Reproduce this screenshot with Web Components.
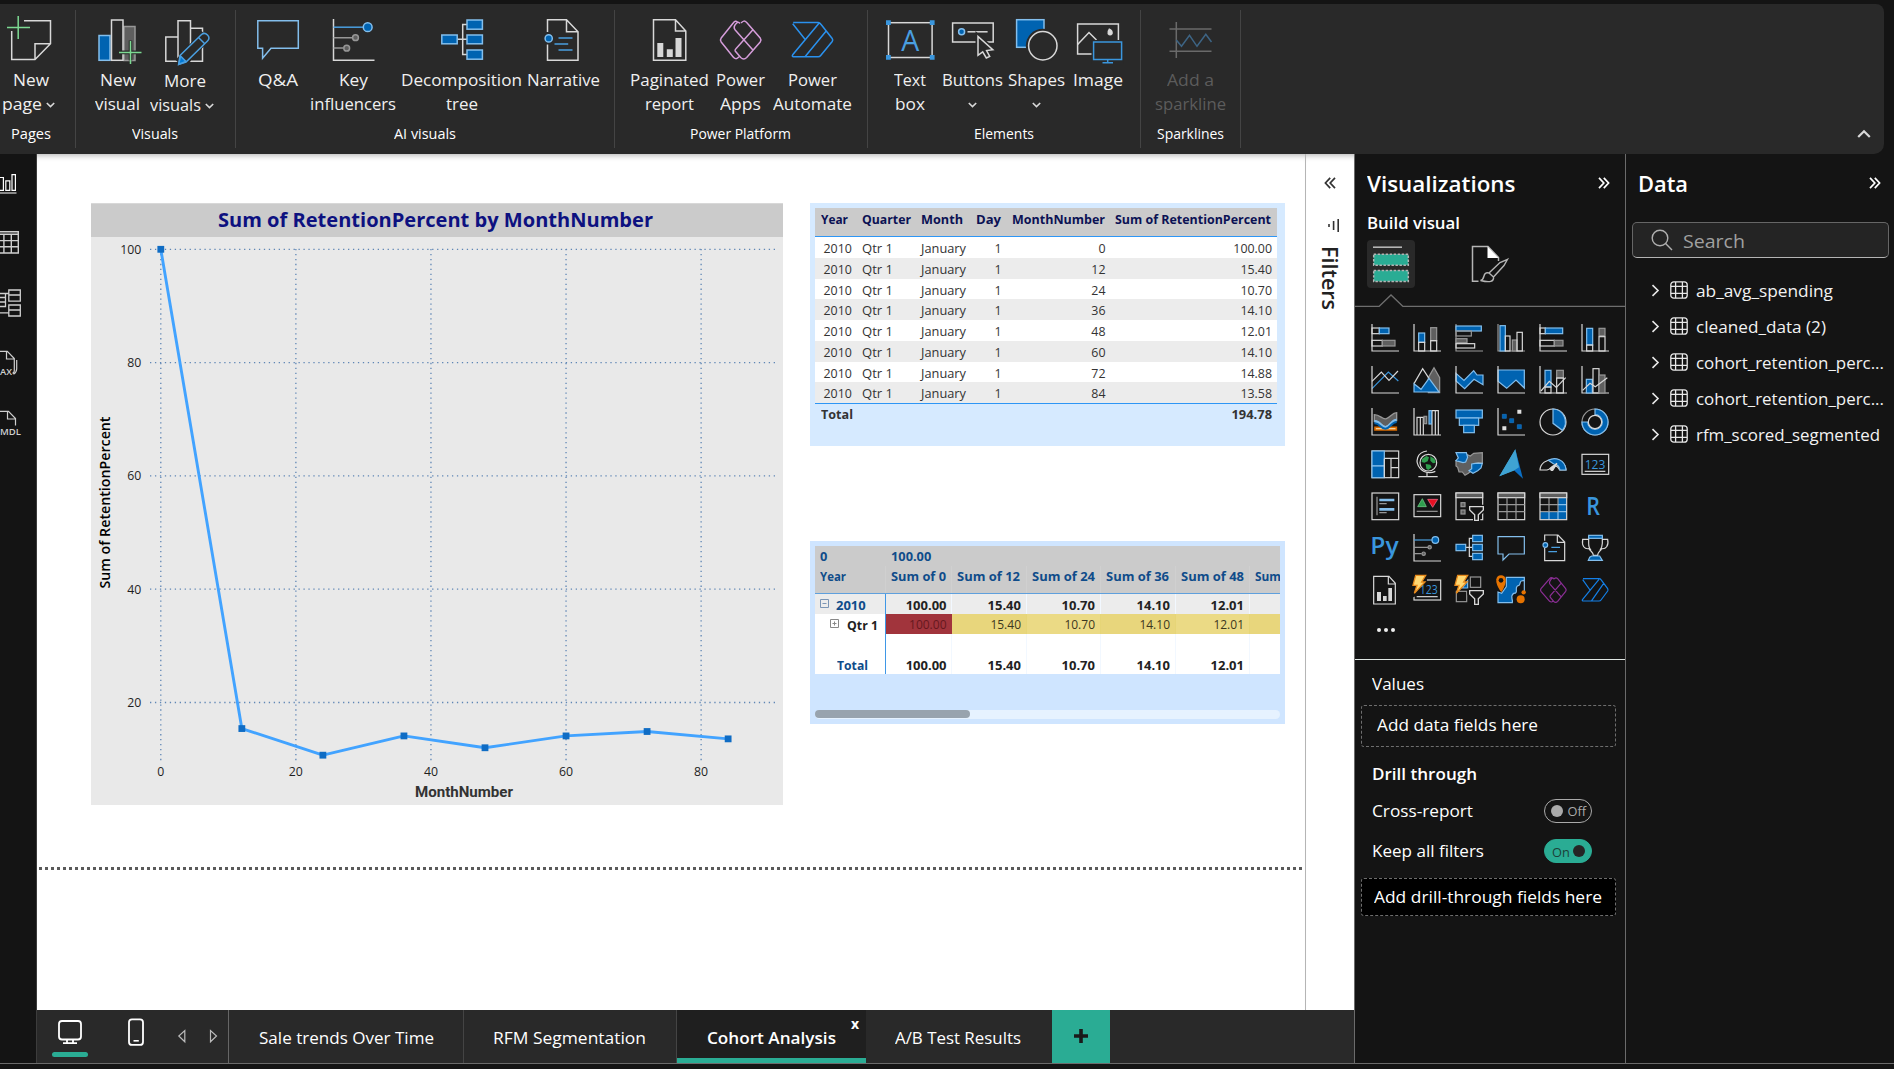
<!DOCTYPE html>
<html lang="en">
<head>
<meta charset="utf-8">
<title>Cohort Analysis</title>
<style>
html,body{margin:0;height:100%;background:#141414;overflow:hidden}
body{font-family:"Open Sans","Noto Sans",sans-serif;color:#fff}
</style>
</head>
<body>
<report-app></report-app>
<script>
const define = (name, css, html, init) => {
  const tpl = document.createElement('template');
  customElements.define(name, class extends HTMLElement {
    constructor() { super(); this.attachShadow({ mode: 'open' }); }
    connectedCallback() {
      if (this.ready) return;
      this.ready = true;
      const body = typeof html === 'function' ? html(this) : html;
      tpl.innerHTML = `<style>*{box-sizing:border-box}${css}</style>${body}`;
      this.shadowRoot.appendChild(tpl.content.cloneNode(true));
      if (init) init(this);
    }
  });
};
const T = (w, s) => `<fit-text w="${w}">${s}</fit-text>`;

/* ---------- application shell ---------- */
define('report-app', `
:host{display:flex;flex-direction:column;width:1894px;height:1069px;padding-top:4px;background:#141414}
.mid{display:flex;height:909px}
.work{display:flex;flex-direction:column;width:1317px}
.row{display:flex;height:856px}
.foot{height:6px;border-top:1px solid #6b6b6b}
`, `
<ribbon-bar></ribbon-bar>
<div class="mid"><view-rail></view-rail>
<div class="work"><div class="row"><report-canvas></report-canvas><filters-pane></filters-pane></div><page-tabs></page-tabs></div>
<viz-pane></viz-pane><data-pane></data-pane></div>
<div class="foot"></div>`);

/* ---------- ribbon ---------- */
const W = '#d8d8d8', B = '#0063b1', L = '#83beec', BG = '#292929';
const ribbonIcons = {
page:`<path d="M24 20.7H50.5V43.7L35 59.5H11.7V31M35 59.5V43.7H50.5" stroke="${W}"/><path d="M18.2 16V39M7 27.4H30" stroke="#7cd992"/>`,
newv:`<rect x="124" y="26.5" width="11" height="34" fill="#5f5f5f" stroke="#979797"/><rect x="99" y="35.5" width="11" height="24.8" fill="${B}" stroke="${L}"/><rect x="111.5" y="20" width="11.5" height="40.3" fill="${BG}" stroke="${W}"/><path d="M130.5 40.5V60.5M122 52.4H136" stroke="${BG}" stroke-width="3.6"/><path d="M130.5 41V64M119 52.4H141.5" stroke="#7cd992"/>`,
more:`<path d="M177.5 61.2H165.8V37H177.5M178 61.2V20.7H190.5V61.2H178M190.5 28.3H202.5V61.2H190.5" stroke="${W}"/><path d="M180 64 206 35" stroke="${BG}" stroke-width="12"/><path d="M180 55.5 201.5 34.5Q204.5 32 207.5 35T207.5 41L186 62 178.7 64.3ZM198.5 37.5 204.5 43.5" stroke="#4a9fe0"/><path d="M180.5 56 186 61.5 178.7 64.3Z" fill="#0078d4" stroke="#4a9fe0"/>`,
qa:`<path d="M257.8 20.8H298.3V48.3H271L262.6 58.3V48.3H257.8Z" stroke="${L}"/>`,
key:`<path d="M333 19V60.2H374" stroke="${W}"/><path d="M333 37.7H352M333 48H343" stroke="#979797"/><path d="M333 27.2H363" stroke="#4a9fe0"/><circle cx="367.2" cy="27.2" r="4.4" fill="${B}" stroke="${L}"/><circle cx="355" cy="37.7" r="2.9" fill="#5f5f5f" stroke="#979797"/><circle cx="346.2" cy="48.2" r="2.9" fill="#5f5f5f" stroke="#979797"/>`,
tree:`<path d="M457.5 39.3H467M467 24.5H462.7V54.5H467" stroke="${W}"/><g fill="${B}" stroke="${L}"><rect x="441.8" y="35" width="15.4" height="8.8"/><rect x="467" y="20" width="15.4" height="9.2"/><rect x="467" y="35" width="15.4" height="8.8"/><rect x="467" y="50" width="15.4" height="9.2"/></g>`,
narr:`<path d="M547 32V19.8H566L577.5 31.7V60.3H547V44.5M566 20V31.7H577.5" stroke="${W}"/><path d="M558 38H572M554 44H567.7M558 50H572" stroke="#4a9fe0"/><circle cx="548.2" cy="38.4" r="3.6" fill="${B}" stroke="${L}"/>`,
pag:`<path d="M653 19.8H675L685.3 31V60.3H653ZM675 20V31H685" stroke="${W}"/><path d="M656.8 43H662.8V57H656.8ZM666.3 49.3H672.3V57H666.3ZM675 38H681V57H675Z" fill="${W}"/>`,
apps:`<path d="M735.5 30Q733 27 736.5 23.5 738.5 21 740.3 23.5M741.5 23Q744 19.5 747 22.5L760.5 38Q762 40 760.5 42L747 57.5Q744 60.5 741 57.5L735.5 51Q735 50 736 49L753 30M735.5 30 753.2 50M737.8 22Q735.5 20.2 733.5 23L721.5 38Q720 40 721.5 42L733.5 57Q736 60 738.5 57.5L740 56" stroke="#d59dda"/>`,
auto:`<path d="M793.5 22.6H818.5Q820 22.6 821 24L832.5 38.5Q833.6 40 832.5 41.5L821 55.5Q820 56.8 818.5 56.8H793.5Q792 56.5 793 54.8L819.5 23M793 23.8 805.5 39.5M826.5 31 805.5 56.5" stroke="#2a91ee"/>`,
text:`<rect x="888.5" y="22.7" width="43.6" height="34.8" stroke="${W}"/><path d="M886 20.2h4.8v4.8h-4.8ZM929.8 20.2h4.8v4.8h-4.8ZM886 55h4.8v4.8h-4.8ZM929.8 55h4.8v4.8h-4.8Z" fill="#3a96dd"/><text x="910.3" y="50.7" font-size="29" text-anchor="middle" fill="#4a9fe0" font-family="Open Sans" font-weight="400" textLength="18" lengthAdjust="spacingAndGlyphs">A</text>`,
btn:`<rect x="952.6" y="23" width="40.6" height="19" stroke="${W}"/><circle cx="961.6" cy="31.8" r="3" fill="${B}" stroke="${L}"/><path d="M967.5 31.8H987.6" stroke="${W}"/><path d="M978 36.5V55.3L982.7 51.8 986.3 58 989.7 56.3 986.6 50.5 992.8 49.8Z" fill="${BG}" stroke="${BG}" stroke-width="5"/><path d="M978 36.5V55.3L982.7 51.8 986.3 58 989.7 56.3 986.6 50.5 992.8 49.8Z" fill="${BG}" stroke="${W}"/>`,
shp:`<rect x="1016.6" y="19.7" width="27.4" height="27.6" fill="${B}" stroke="${L}"/><circle cx="1042.8" cy="45.8" r="17" fill="${BG}"/><circle cx="1042.8" cy="45.8" r="14.2" stroke="${W}"/>`,
img:`<rect x="1077.6" y="24" width="40.8" height="30" stroke="${W}"/><path d="M1077.6 44.5 1089 32.5 1096.5 40" stroke="${W}"/><path d="M1109 28.3Q1113.5 30 1112.7 34 1110 37 1107.5 34 1107 31 1109 28.3Z" fill="${W}"/><rect x="1091.5" y="40" width="32" height="24" fill="${BG}"/><path d="M1093.6 42H1121.6V59.6H1093.6ZM1107.7 59.6V62.7M1102.5 62.7H1113" stroke="#3a96dd"/>`,
spk:`<path d="M1175.8 22V58M1169 29H1211M1169 51.2H1211" stroke="#6a6a6a"/><path d="M1175.8 40 1181 46.3 1189 35.3 1196.5 46.3 1205.3 34.3 1211 42" stroke="#3d6484"/>`
};
const chev = `<svg class="cv" width="9" height="6" viewBox="0 0 9 6"><path d="M.8 1 4.5 4.6 8.2 1" fill="none" stroke="#d8d8d8" stroke-width="1.6"/></svg>`;
// Each command: icon, centre x, cell width, line one and line two as [width, text, chevron]
const groups = [
 [0,75,[40,'Pages'],31,[['page',31,62,[36,'New'],[40,'page',1]]]],
 [75,235,[46,'Visuals'],155,[['newv',118,60,[36,'New'],[45,'visual']],['more',186,68,[42,'More'],[51,'visuals',1]]]],
 [235,614,[62,'AI visuals'],425,[['qa',278,60,[40,'Q&amp;A']],['key',353.5,88,[29,'Key'],[86,'influencers']],['tree',462,122,[121,'Decomposition'],[32,'tree']],['narr',563.5,76,[73,'Narrative']]]],
 [614,867,[101,'Power Platform'],740.5,[['pag',669.5,80,[79,'Paginated'],[49,'report']],['apps',741.3,60,[49,'Power'],[41,'Apps']],['auto',813.3,82,[49,'Power'],[79,'Automate']]]],
 [867,1140,[60,'Elements'],1003.5,[['text',910,60,[32,'Text'],[30,'box']],['btn',973,62,[61,'Buttons'],[0,'',1]],['shp',1037,60,[57,'Shapes'],[0,'',1]],['img',1098,56,[50,'Image']]]],
 [1140,1240,[67,'Sparklines'],1190.5,[['spk',1190.5,80,[47,'Add a'],[71,'sparkline']]]]
];
define('ribbon-button', `
:host{display:flex;flex-direction:column;align-items:center;flex:none;width:var(--w);color:#f0f0f0;font-size:17px}
:host([icon=spk]){color:#5c5c5c}
svg.ic{display:block;fill:none;stroke-width:1.5;overflow:visible}
.l{display:flex;height:24px;line-height:24px;align-items:center;justify-content:center;padding-right:1px}
:host([icon=page]) .l{padding-right:0}
:host([icon=page]) .l+.l{padding-right:5px}
:host([icon=more]) .l{position:relative;top:1px;padding-right:2px}
:host([icon=more]) .l+.l{padding-right:8px}
.cv{margin-left:4px;margin-top:2px}.solo .cv{margin-left:0;margin-right:1px}`,
 el => {
  const [ic, cx, w, a, b] = el.data;
  const line = l => l ? `<div class="l${l[1] ? '' : ' solo'}">${l[1] ? T(l[0], l[1]) : ''}${l[2] ? chev : ''}</div>` : '';
  return `<svg class="ic" width="50" height="54" viewBox="${cx - 25} 14 50 54">${ribbonIcons[ic]}</svg>${line(a)}${line(b)}`;
 });
define('ribbon-bar', `
:host{display:flex;position:relative;flex:none;width:1884px;height:150px;background:#292929;border-radius:0 8px 10px 0;z-index:2}
.g{display:flex;flex-direction:column;height:138px;margin-top:6px;border-right:1px solid #444}
.items{display:flex;height:112px;padding-top:4px;flex:none}
.lab{font-size:14.2px;line-height:20px;margin-top:2px;color:#fff;white-space:nowrap}
.up{margin:125px 13px 0 auto}`,
 '', el => {
  for (const [x0, x1, lab, lc, items] of groups) {
    const g = document.createElement('div'); g.className = 'g';
    g.style.width = (x1 - x0) + (x0 ? 0 : 1) + 'px';
    const row = document.createElement('div'); row.className = 'items';
    let at = x0 + (x0 ? 1 : 0);
    for (const it of items) {
      const b = document.createElement('ribbon-button');
      b.data = it; b.setAttribute('icon', it[0]);
      b.style.setProperty('--w', it[2] + 'px');
      b.style.marginLeft = (it[1] - it[2] / 2 - at) + 'px';
      at = it[1] + it[2] / 2;
      row.append(b);
    }
    const l = document.createElement('div'); l.className = 'lab';
    l.style.paddingLeft = (lc - lab[0] / 2 - x0 - (x0 ? 1 : 0)) + 'px';
    l.innerHTML = T(lab[0], lab[1]);
    g.append(row, l); el.shadowRoot.append(g);
  }
  const up = document.createElement('template');
  up.innerHTML = `<svg class="up" width="14" height="10" viewBox="0 0 14 10"><path d="M1.2 8 7 2.2 12.8 8" fill="none" stroke="#d8d8d8" stroke-width="2.2"/></svg>`;
  el.shadowRoot.append(up.content);
 });

/* ---------- left view rail ---------- */
define('view-rail', `
:host{display:flex;flex-direction:column;flex:none;width:37px;background:#141414;border-right:1px solid #3c3c3c;overflow:hidden}
svg{display:block;flex:none;fill:none;stroke:#cfcfcf;stroke-width:1.2}
text{fill:#cfcfcf;stroke:none;font:600 9.5px "Open Sans"}`, `
<svg width="36" height="60" viewBox="0 154 36 60" stroke-width="1.4" style="stroke:#fff"><path d="M-1 177.5H3.4V190.3H-1M5.8 180.8H9.8V190.3H5.8ZM12 174.6H15.4V190.3H12ZM0 193H16.5"/></svg>
<svg width="36" height="60" viewBox="0 214 36 60"><path d="M0 231.7H18.3V253H0M0 234.3H18.3M0 240.6H18.3M0 246.8H18.3M3.9 234V253M11.3 234V253" stroke-width="1.4"/></svg>
<svg width="36" height="60" viewBox="0 274 36 60"><path d="M8.8 290H20.3V301.2H8.8ZM8.8 295H20.3M8.8 305H20.3V316H8.8ZM8.8 310H20.3M0 293.5H8.8M0 312.8H8.8M5.5 293.5V297.5M0 297.5H5.5V306.5H0M0 302H5.5" stroke-width="1.3"/></svg>
<svg width="36" height="60" viewBox="0 334 36 60"><path d="M0 351.3H7.3L14.3 358.5V370.5Q14.3 373 12.5 373.2M6.5 351.5V359H14M16.7 360V369Q16.5 372.5 13.5 374.2"/><text x="0" y="374.7" textLength="12" lengthAdjust="spacingAndGlyphs">AX</text></svg>
<svg width="36" height="60" viewBox="0 394 36 60"><path d="M0 411.3H8.5L15.5 418.5V425.5M7.5 411.5V419H15.5"/><text x="0" y="435" textLength="21" lengthAdjust="spacingAndGlyphs">MDL</text></svg>`);

/* ---------- canvas ---------- */
define('report-canvas', `
:host{display:block;flex:none;width:1269px;background:#fff;border-right:1px solid #b5b5b5;box-shadow:inset 0 7px 6px -6px #aaa}
.v{display:flex;padding:49px 0 0 54px;height:652px}
.col{display:flex;flex-direction:column;margin-left:27.5px;gap:95px}
.edge{height:3px;margin:61px 2px 0 2px;background:repeating-linear-gradient(90deg,#5a5a5a 0 3px,transparent 3px 6px)}`,
`<div class="v"><line-chart></line-chart><div class="col"><retention-table></retention-table><cohort-matrix></cohort-matrix></div></div><div class="edge"></div>`);

define('line-chart', `
:host{display:block;flex:none;width:691.5px;height:602px;background:#e9e9e9;overflow:hidden}
.t{display:flex;align-items:center;justify-content:center;height:34px;background:#cbcbcb;border-top:1px solid #d8d8d8;color:#0d1180;font-weight:700;font-size:20px;line-height:30px;padding-bottom:2px;padding-right:2px}
svg{display:block}
text{font:12.3px "Open Sans";fill:#1f1f1f}
.ax{font-weight:600;font-size:13.8px;fill:#000}.dn{font:700 14.5px Roboto;fill:#333}
.grid{stroke:#5f86b5;stroke-width:1.3;stroke-dasharray:1.3 3.65}`, () => {
  const X = v => 160.8 + v * 6.754, Y = v => 702.5 + (20 - v) * 5.665;
  const pts = [[0,100],[12,15.4],[24,10.7],[36,14.1],[48,12.01],[60,14.1],[72,14.88],[84,13.58]];
  let s = '';
  for (const v of [20,40,60,80,100]) s += `<line class="grid" x1="150" x2="776" y1="${Y(v)}" y2="${Y(v)}"/><text x="141.3" y="${Y(v) + 4.5}" text-anchor="end">${v}</text>`;
  for (const v of [0,20,40,60,80]) s += `<line class="grid" x1="${X(v)}" x2="${X(v)}" y1="249" y2="761"/><text x="${X(v)}" y="775.8" text-anchor="middle">${v}</text>`;
  s += `<polyline points="${pts.map(p => X(p[0]) + ',' + Y(p[1])).join(' ')}" fill="none" stroke="#42a3ff" stroke-width="2.9" stroke-linejoin="round"/>`;
  s += pts.map(p => `<rect x="${X(p[0]) - 3.4}" y="${Y(p[1]) - 3.4}" width="6.8" height="6.8" fill="#0f6cc4"/>`).join('');
  s += `<text class="dn" x="415" y="797" textLength="98" lengthAdjust="spacingAndGlyphs">MonthNumber</text>`;
  s += `<text class="ax" transform="translate(109.5 588.5) rotate(-90)" textLength="172" lengthAdjust="spacingAndGlyphs">Sum of RetentionPercent</text>`;
  return `<div class="t">${T(435, 'Sum of RetentionPercent by MonthNumber')}</div><svg width="692" height="568" viewBox="91 237 692 568">${s}</svg>`;
});

define('retention-table', `
:host{display:block;flex:none;width:475px;height:243px;background:#d6eaff;padding:5px 8px 0 5px;font-size:12.4px;color:#333}
.r{display:grid;grid-template-columns:42px 59px 56px 34.5px 104px 1fr;height:20.75px;line-height:23px;background:#fff}
.r:nth-child(even){background:#ececec}
.r>*{white-space:nowrap}
.r.h{background:#cbcbcb;height:29px;line-height:23.5px;font-weight:700;color:#0b1254;border-bottom:1.5px solid #2e96f5;font-size:12.8px}
.r>:nth-child(1){padding-left:8.5px}.r>:nth-child(2),.r>:nth-child(3){padding-left:5px}
.r>:nth-child(n+4){text-align:right;padding-right:5px}
.r.h>:nth-child(1){padding-left:6px}
.r.h>:nth-child(n+4){padding-right:6px}
.r.t{background:none;border-top:1.5px solid #2e96f5;font-weight:700;font-size:12.9px;line-height:21.5px}
.r.t>:nth-child(1){padding-left:6px}`, () => {
  const rows = [['0','100.00'],['12','15.40'],['24','10.70'],['36','14.10'],['48','12.01'],['60','14.10'],['72','14.88'],['84','13.58']];
  const h = [[27,'Year'],[49,'Quarter'],[42,'Month'],[25,'Day'],[93,'MonthNumber'],[156,'Sum of RetentionPercent']];
  return `<div class="r h">${h.map(c => `<div>${T(...c)}</div>`).join('')}</div>` +
   rows.map(r => `<div class="r"><div>2010</div><div>${T(31,'Qtr 1')}</div><div>${T(45,'January')}</div><div>1</div><div>${r[0]}</div><div>${r[1]}</div></div>`).join('') +
   `<div class="r t"><div>${T(32,'Total')}</div><div></div><div></div><div></div><div></div><div>194.78</div></div>`;
});

define('cohort-matrix', `
:host{display:flex;flex-direction:column;flex:none;width:475px;height:183px;background:#cfe5ff;padding:5px 5px 0 5px;font-size:13px;color:#222;font-weight:700}
.r{display:grid;grid-template-columns:71px 66px 74.5px 74px 75px 74px 31px;height:20px;line-height:22px;overflow:hidden;background:#fff;flex:none}
.r>*{white-space:nowrap;overflow:hidden;text-align:right;padding-right:4.5px;border-right:1px solid #f2f8ff}
.r>:first-child{text-align:left;color:#0f4c8a;border-right:1.5px solid #3f97e6;padding:0}
.h{background:#cbcbcb;color:#0f4c8a;font-size:12.8px}
.h>*,.h>:first-child{border-right:1px solid #d0d0d0;text-align:left;padding-left:5px;padding-right:0}
.h2{height:28px;border-bottom:1.5px solid #5fa0dd;line-height:21px}
.h1{line-height:21px}.h1>*{border-color:transparent!important}
.y{background:#ececec}
.q{font-weight:400;font-size:12px;color:#3c3820;line-height:22px}
.q>:first-child{color:#222;font-weight:700;font-size:12.8px}
.q>:nth-child(n+2){background:#e8d67c;border-color:#e6d577}.q>:nth-child(4),.q>:nth-child(6){background:#ebda85}
.q>:nth-child(2){background:#a1343c;color:#66181e;border:0;padding-right:5.5px}
svg{display:inline-block;vertical-align:2px;fill:none;stroke:#7b95b5}
.sp{flex:1}
.sb{height:9px;border-radius:5px;background:#e6f2ff;margin-bottom:5px}.sb div{width:155px;height:8px;border-radius:5px;background:#98a3ae}`, () => {
  const v = ['100.00','15.40','10.70','14.10','12.01',''];
  const d = v.map(x => `<div>${x}</div>`).join('');
  return `<div class="r h h1"><div>0</div><div>100.00</div><div></div><div></div><div></div><div></div><div></div></div>
  <div class="r h h2"><div>${T(26,'Year')}</div><div>${T(55,'Sum of 0')}</div>${['12','24','36','48'].map(n => `<div>${T(63,'Sum of ' + n)}</div>`).join('')}<div style="border:0">${T(26,'Sum')}</div></div>
  <div class="r y"><div><svg width="9" height="9" style="margin:0 7px 0 5px"><path d="M.5.5H8.5V8.5H.5ZM2.5 4.5H6.5"/></svg>2010</div>${d}</div>
  <div class="r q"><div><svg width="9" height="9" style="margin:0 8px 0 15px;stroke:#888"><path d="M.5.5H8.5V8.5H.5ZM2.5 4.5H6.5M4.5 2.5V6.5"/></svg>${T(31,'Qtr 1')}</div>${d}</div>
  <div class="r"><div></div><div></div><div></div><div></div><div></div><div></div><div></div></div>
  <div class="r"><div style="padding-left:22px">${T(31,'Total')}</div>${d}</div><div class="sp"></div><div class="sb"><div></div></div>`;
});

/* ---------- filters strip ---------- */
const dbl = (c, flip) => `<svg width="12" height="12" viewBox="0 0 12 12" style="display:block${flip ? ';transform:scaleX(-1)' : ''}"><path d="M1 .8 5.8 6 1 11.2M5.8 .8 10.6 6 5.8 11.2" fill="none" stroke="${c}" stroke-width="1.7"/></svg>`;
define('filters-pane', `
:host{display:flex;flex-direction:column;flex:none;width:48px;background:#fff;color:#222;box-shadow:inset 0 7px 6px -6px #aaa;padding:23px 0 0 18px}
.i{display:block;margin:29px 0 13px 3px}
.f{writing-mode:vertical-rl;font-weight:600;font-size:21.5px;line-height:26px;height:72px;width:26px;margin-left:-7px}`,
`${dbl('#333', 1)}<svg class="i" width="13" height="15" viewBox="0 0 13 15"><path d="M11.2 1V14M6.6 3V12M2 6V9" stroke="#333" stroke-width="1.6"/></svg><div class="f">Filters</div>`);

/* ---------- page tabs ---------- */
define('page-tabs', `
:host{display:flex;height:53px;background:#292929;font-size:16.8px;color:#fff;line-height:24px}
.nav{display:flex;width:192px;border-right:1px solid #666;flex:none}
.nav svg{display:block;fill:none;stroke:#fff;stroke-width:1.8}
.tab{display:flex;position:relative;align-items:center;justify-content:center;flex:none;border-right:1px solid #444;padding-top:3px}
.on{background:#1f1f1f;border:0;border-bottom:5px solid #2aac94;font-weight:600;padding-top:8px}
.x{position:absolute;right:7px;top:3px;font-size:14px;font-weight:700;line-height:22px}
.add{display:flex;align-items:center;justify-content:center;width:58px;background:#2aac94;padding-bottom:2px}`,
`<div class="nav"><svg width="191" height="53" viewBox="37 1010 191 53"><rect x="59" y="1021" width="22" height="18.5" rx="3"/><path d="M67 1039.5V1043M73 1039.5V1043M63 1043.2H77"/><rect x="52" y="1052" width="36" height="5" rx="2.5" fill="#2aac94" stroke="none"/><rect x="129" y="1019.3" width="14" height="25.6" rx="3"/><path d="M133.5 1040.8H138.8" stroke-width="1.6"/><path d="M184.8 1030.5V1041.8L178.8 1036ZM210.5 1030.5V1041.8L216.5 1036Z" stroke="#bbb" stroke-width="1.2"/></svg></div>
<div class="tab" style="width:235px">${T(175,'Sale trends Over Time')}</div>
<div class="tab" style="width:212.5px">${T(153,'RFM Segmentation')}</div>
<div class="tab on" style="width:189.5px">${T(129,'Cohort Analysis')}<span class="x">x</span></div>
<div class="tab" style="width:186px;border:0;padding-right:2px">${T(126,'A/B Test Results')}</div>
<div class="add"><svg width="16" height="16" viewBox="0 0 16 16"><path d="M8 1V15M1 8H15" stroke="#1a1a1a" stroke-width="3.6"/></svg></div>`);

/* ---------- visualization gallery, 84-unit icon grid ---------- */
const ax = `<path d="M3 0V81H84" stroke="${W}"/>`, G = '#5f5f5f', GS = '#979797';
const R = (x, y, w, h, f, s) => `<rect x="${x}" y="${y}" width="${w}" height="${h}" fill="${f || 'none'}" stroke="${s || W}"/>`;
const funnel = `<path d="M42 43H86V55L71 69V85H59V69L42 55Z" fill="#141414" stroke="#141414" stroke-width="10"/><path d="M44 44H85V54L70 68V85H59V68L44 54Z" fill="#141414" stroke="${W}" stroke-width="4"/>`;
const bolt = `<path d="M8-2H38L26 18H36L4 52 12 28H0Z" fill="#ffd873" stroke="#e88a1c" stroke-width="4"/>`;
const viz = [
 ax+R(3,12,22,17)+R(25,12,29,17,B,L)+R(3,49,31,17)+R(34,49,38,17,G,GS),
 ax+R(17,27,18,28,B,L)+R(17,55,18,26)+R(53,11,18,39,G,GS)+R(53,50,18,31),
 `<path d="M3 0V81H84" stroke="${GS}"/>`+R(3,6,76,15,B,L)+R(3,21,46,15,'',GS)+R(3,44,33,12,G,GS)+R(3,59,56,13),
 `<path d="M3 0V81H84" stroke="${GS}"/>`+R(9,5,16,76,B,L)+R(25,36,14,45)+R(46,48,14,33,G,GS)+R(60,25,16,56),
 ax+R(3,12,16,17)+R(19,12,52,17,B,L)+R(3,49,43,17)+R(46,49,26,17,G,GS),
 ax+R(17,13,18,50,B,L)+R(17,63,18,18)+R(54,13,18,22,G,GS)+R(54,38,18,43),
 `<path d="M3 68 52 18 82 45" stroke="#3a96dd"/><path d="M3 46 31 18 54 43 81 15" stroke="${W}"/><path d="M3 0V81H84" stroke="${W}"/>`,
 `<path d="M46 35 63 5 80 35V80H46Z" fill="${G}" stroke="${GS}"/><path d="M3 53 29 8 48 37" stroke="${W}"/><path d="M3 53 24 70 48 37 78 78H3Z" fill="${B}" stroke="${L}"/>`,
 `<path d="M3 22 27 43 56 14 66 27H84V56L57 40 29 68 3 45Z" fill="${B}" stroke="${L}"/><path d="M3 0V81H84" stroke="${W}"/>`,
 `<path d="M3 12H82V66L57 42 29 67 3 46Z" fill="${B}" stroke="${L}"/><path d="M3 0V81H84" stroke="${W}"/>`,
 ax+R(18,13,18,50,B,L)+R(18,63,18,18)+R(53,13,20,23,G,GS)+R(53,36,20,45)+`<path d="M6 75 31 46 52 64 80 35" stroke="${W}"/>`,
 ax+R(16,40,18,41,B,L)+R(36,8,18,73)+R(54,27,18,54,G,GS)+`<path d="M5 73 27 52 43 62 79 35" stroke="${W}"/>`,
 `<path d="M12 58H76V66H12Z" fill="#fff0c8" stroke="#d86a00" stroke-width="5"/><path d="M10 20C28 20 34 36 46 32S64 14 77 14V38C60 38 56 60 42 56S26 36 10 40Z" fill="${G}" stroke="${GS}" stroke-width="4"/><path d="M10 40C28 38 28 58 43 58S60 36 77 36" stroke="${L}" stroke-width="8"/><path d="M10 46C26 44 28 62 43 62S60 42 77 42" stroke="${B}" stroke-width="6"/>`+ax,
 ax+`<path d="M12 81V28H31V81M22 81V28M57 81V8H76V81M67 81V8" stroke="${W}"/>`+R(33,25,8,22,G,GS)+R(48,8,7,40,B,L),
 R(3,6,79,24,B,L)+R(13,30,58,22,B,L)+R(26,52,32,22,B,L),
 ax+`<path d="M61 5h12v12H61ZM16 55h12v12H16Z" fill="#e0e0e0"/><path d="M16 19h12v12H16ZM38 32h12v12H38ZM61 50h12v12H61Z" fill="${B}" stroke="#1b74c4" stroke-width="2"/>`,
 `<circle cx="42" cy="42" r="39" stroke="${W}"/><path d="M42 3A39 39 0 0 1 70 67L42 46Z" fill="${B}" stroke="${L}"/>`,
 `<circle cx="42" cy="42" r="39" fill="#141414" stroke="${GS}"/><path d="M42 3A39 39 0 1 1 3 42H20A22 22 0 1 0 42 20Z" fill="${B}" stroke="${L}"/><circle cx="42" cy="42" r="20" fill="#141414" stroke="${W}"/>`,
 R(3,3,80,80)+R(3,3,37,45,B,L)+R(3,48,37,35,B,L)+`<path d="M40 25H83M60 26V83M40 83V26M60 53H83" stroke="${W}"/>`,
 `<circle cx="46" cy="38" r="25" stroke="${W}"/><path d="M27 27 40 18 48 22 44 34 34 38 26 36ZM52 19 65 27 68 38 60 40 52 32ZM38 42 52 44 56 52 46 60 40 56Z" fill="#2f9e4e"/><path d="M42 3C12 6 4 36 22 56 34 70 54 70 67 64M42 67V79M16 80H74" stroke="${W}"/>`,
 `<path d="M36 14 46 18 56 10 82 8V40L70 38 56 42 50 62 40 70 30 76 22 66 12 66 8 52 3 48V32H24Z" fill="${G}" stroke="${GS}"/><path d="M3 8H34L38 22 32 36 24 38 3 32 10 24Z" fill="${B}" stroke="${L}"/><path d="M50 42 60 40 82 40 78 54 68 62 54 70 42 62 50 56Z" fill="${B}" stroke="${L}"/>`,
 `<path d="M55-2 7 79 52 60Z" fill="#41a5d6"/><path d="M55-2 78 86 50 60Z" fill="#0b6fc4"/><path d="M55-2 66 52 50 62 7 79Z" fill="#3fa3d3"/>`,
 `<path d="M3 60C5 18 79 18 81 60H62C58 50 50 46 42 48L30 58 24 60Z" stroke="${W}"/><path d="M28 31C48 20 79 28 81 60H63C62 50 54 42 44 42Z" fill="${B}" stroke="${L}"/><path d="M54 40 42 60A4 4 0 0 1 36 54Z" fill="${W}" stroke="${W}"/>`,
 R(3,13,80,60)+`<text x="11" y="56" font-size="40" textLength="62" lengthAdjust="spacingAndGlyphs">123</text><path d="M11 64H73" stroke="${W}"/>`,
 R(3,3,80,80)+`<path d="M18 14V70" stroke="${GS}"/><path d="M25 24H70M25 52H70" stroke="${L}" stroke-width="8"/><path d="M25 35H47M25 62H47" stroke="${GS}" stroke-width="4"/>`,
 R(3,8,80,66)+`<path d="M14 44 28 20 40 44Z" fill="#2f9e4e" stroke="#7cd992" stroke-width="2"/><path d="M44 22H74L59 46Z" fill="#e81123" stroke="#f79" stroke-width="2"/><path d="M11 58H74" stroke="${GS}"/>`,
 R(3,3,80,80)+R(3,3,80,14,G)+R(18,32,12,12,G,GS)+R(18,54,12,12,G,GS)+funnel,
 R(3,3,80,80)+R(3,3,80,14,G)+`<path d="M3 38H83M3 59H83M30 17V83M57 17V83" stroke="${GS}"/>`,
 `<path d="M57 17H82V82H4V59H57Z" fill="${B}"/><path d="M3 38H57M30 17V59M3 59H57M57 17V59" stroke="${GS}"/><path d="M57 38H83M57 59H83M30 59V83M57 59V83" stroke="${L}"/>`+R(3,3,80,80)+R(3,3,80,14,G),
 `<text x="16" y="69" font-size="74" font-weight="600" textLength="41" lengthAdjust="spacingAndGlyphs">R</text>`,
 `<text x="-2" y="60" font-size="70" font-weight="600" textLength="85" lengthAdjust="spacingAndGlyphs">Py</text>`,
 ax+`<path d="M3 18H60" stroke="#4a9fe0"/><circle cx="67" cy="18" r="10" fill="${B}" stroke="${L}"/><path d="M3 40H45M3 59H26" stroke="${GS}"/><circle cx="50" cy="40" r="5" fill="${G}" stroke="${GS}"/><circle cx="32" cy="59" r="5" fill="${G}" stroke="${GS}"/>`,
 `<path d="M33 40H51M51 13H43V67H51" stroke="${W}"/>`+R(3,31,29,19,B,L)+R(53,4,29,19,B,L)+R(53,31,29,19,B,L)+R(53,58,29,19,B,L),
 `<path d="M3 8H82V60H36L18 78V60H3Z" stroke="${L}"/>`,
 `<path d="M17 20V3H57L77 24V80H17V42M55 4V25H77" stroke="${W}"/><path d="M37 40H63M28 53H54" stroke="#4a9fe0"/><circle cx="19" cy="33" r="7" fill="${B}" stroke="${L}"/>`,
 `<path d="M23 8H64V16H80C84 36 74 46 62 44 56 54 50 54 50 64H37C37 54 30 54 24 44 10 46 2 36 5 16H23ZM23 12V28C23 38 25 44 30 48M64 12V28C64 38 60 44 57 48" stroke="${W}"/>`+R(23,4,41,9,B,L)+`<path d="M26 70 32 66H56L64 79H22Z" fill="${B}" stroke="${L}"/>`,
 `<path d="M8 1H54L73 22V84H8ZM52 2V24H73" stroke="${W}"/><path d="M18 48H30V75H18ZM36 60H47V75H36ZM52 36H63V75H52Z" fill="${W}"/>`,
 R(3,12,80,60)+`<path d="M-6-4H40V46L0 62Z" fill="#141414" stroke="#141414"/><text x="20" y="55" font-size="40" textLength="54" lengthAdjust="spacingAndGlyphs">123</text><path d="M11 62H74" stroke="${W}"/>`+bolt,
 R(46,3,31,31,'#141414',GS)+R(4,46,31,31,'',GS)+`<path d="M38 14V36H22Z" fill="${B}" stroke="${L}"/>`+bolt+funnel,
 `<path d="M3 48V80H46C48 66 38 62 50 52 68 52 48 30 66 28 72 22 66 12 82 14V4H28V32L14 52Z" fill="${B}" stroke="${L}"/><path d="M82 14V52" stroke="${L}"/><path d="M10 45Q-4 24-2 10Q0-2 12-2T26 10Q28 24 14 48Z" fill="#e67300"/><circle cx="12" cy="13" r="7" fill="#141414"/><circle cx="71" cy="70" r="12" fill="#e67300"/><circle cx="80" cy="49" r="6.5" fill="#e67300"/>`,
 `<path d="M34 26Q28 20 36 10 42 3 46 10M46 8Q51 3 56 8L80 38Q83 42 80 46L56 76Q50 82 44 76L34 64Q32 62 34 59L66 22M34 26 66 62M42 6Q36 3 32 8L6 38Q3 42 6 46L32 76Q37 80 42 76" stroke="#8c2f96"/>`,
 `<path d="M6 8H54Q58 8 60 11L80 38Q82 42 80 45L60 72Q58 75 54 75H6Q2 74 5 70L54 10M5 11 27 42M68 22 32 74" stroke="#1480e8"/>`
];
define('viz-gallery', `
:host{display:grid;grid-template-columns:repeat(6,28px);gap:14px;padding:17px 0 0 16px;align-content:start}
svg{display:block;width:28px;height:28px;overflow:visible;fill:none;stroke-width:3.6}
text{fill:#3a96dd;stroke:none;font-family:"Open Sans"}
.more{display:flex;gap:3px;margin:10px 0 0 6px;height:4px}.more i{width:4px;height:4px;border-radius:2px;background:#eee}`,
 () => viz.map(v => `<svg viewBox="0 0 84 84">${v}</svg>`).join('') + `<div class="more"><i></i><i></i><i></i></div>`);

define('toggle-pill', `
:host{display:flex;align-items:center;width:48px;height:24px;border-radius:12px;border:1px solid #aaa;color:#aaa;font-size:12.8px;padding:0 5px 0 6px;justify-content:space-between}
i{width:12px;height:12px;border-radius:6px;background:#aaa}
:host([on]){background:#2aac94;border-color:#2aac94;color:#1c3f38;flex-direction:row-reverse;padding:2px 6px 0 7px}
:host([on]) i{background:#252525;margin-top:-2px}`, `<i></i><slot></slot>`);

define('viz-pane', `
:host{display:block;flex:none;width:272px;background:#141414;border:1px solid #6b6b6b;border-width:0 1px 0 1px;font-size:16.6px;line-height:24px}
.hd{display:flex;justify-content:space-between;align-items:center;height:28px;margin-top:16px;padding:0 15px 0 12px;font-size:22px;font-weight:600}
.hd fit-text,.hd svg{margin-top:-2px}
.sub{padding:13px 0 0 12px;font-weight:600;height:42px}
.modes{display:block;margin:0}
.gal{height:352px}
.wells{border-top:1px solid #dfe6e3;display:flex;flex-direction:column;padding-left:6px}
.lb{padding-left:11px;height:24px;display:flex;align-items:center}
.box{display:flex;align-items:center;width:255px;border:1px dashed #6e6e6e;border-radius:3px;padding-left:14.5px}
.tg{display:flex;justify-content:space-between;align-items:center;width:231px;padding-left:11px;height:24px}`,
`<div class="hd">${T(148.5,'Visualizations')}${dbl('#fff')}</div><div class="sub">${T(93,'Build visual')}</div>
<svg class="modes" width="270" height="67" viewBox="1355 240 270 67" fill="none"><rect x="1367" y="240" width="48" height="48" rx="4" fill="#292929"/><path d="M1373 247.2H1402" stroke="#b5b5b5" stroke-width="1.6"/><g fill="#2aac94" stroke="#b5b5b5" stroke-width="1.5" stroke-dasharray="2.4 1.6"><rect x="1373.7" y="254.2" width="34.6" height="11"/><rect x="1373.7" y="270.4" width="34.6" height="11"/></g><path d="M1478.5 281.3H1472.5V246.5H1488L1498.5 257.5V261" stroke="#b5b5b5" stroke-width="1.5"/><path d="M1487.5 246.5 1498.5 258H1487.5Z" fill="#fff"/><path d="M1507.5 259.3 1500 262.5 1489 273 1493.5 277 1504 265.5ZM1489 273Q1485 272 1484 276 1483 280 1480.5 280.5 1494.5 284 1493.5 277" stroke="#b5b5b5" stroke-width="1.4"/><path d="M1355 306.5H1379L1391 295 1403 306.5H1625" stroke="#6e6e6e" stroke-width="1.3"/></svg>
<viz-gallery class="gal"></viz-gallery>
<div class="wells"><div class="lb" style="margin-top:12px">${T(52,'Values')}</div>
<div class="box" style="height:42px;margin-top:9px;padding-bottom:2px">${T(161,'Add data fields here')}</div>
<div class="lb" style="margin-top:15px;font-weight:600">${T(105,'Drill through')}</div>
<div class="tg" style="margin-top:13px">${T(101,'Cross-report')}<toggle-pill>Off</toggle-pill></div>
<div class="tg" style="margin-top:16px">${T(112,'Keep all filters')}<toggle-pill on>On</toggle-pill></div>
<div class="box" style="height:38px;margin-top:15px;background:#000;padding-left:12px">${T(228,'Add drill-through fields here')}</div></div>`);

/* ---------- data pane ---------- */
define('data-table-item', `
:host{display:flex;align-items:center;height:36px;padding-left:25px;font-size:16.6px;color:#f2f2f2;line-height:24px}
svg{display:block;fill:none;stroke:#e8e8e8;flex:none}.c{margin-right:10px}.g{margin-right:7.5px}
slot{display:block;padding-top:1px}`,
`<svg class="c" width="9" height="13" viewBox="0 0 9 13"><path d="M1.5 1.2 7 6.5 1.5 11.8" stroke-width="1.6"/></svg><svg class="g" width="18" height="18" viewBox="0 0 18 18" stroke-width="1.3"><rect x=".8" y=".8" width="16.4" height="16.4" rx="3"/><path d="M1 5.3H17M1 12.4H17M5.6 1V17M12.4 1V17"/></svg><slot></slot>`);
define('data-pane', `
:host{display:block;flex:none;width:268px;background:#141414}
.hd{display:flex;justify-content:space-between;align-items:center;height:28px;margin-top:16px;padding:0 13px 0 12px;font-size:22px;font-weight:600}
.hd fit-text,.hd svg{margin-top:-2px}
.s{display:flex;align-items:center;height:36px;margin:24px 5px 14px 6px;border:1px solid #666;border-bottom-color:#b5b5b5;border-radius:5px;background:#242424;color:#a0a0a0;font-size:19px;padding-left:18px}
.s fit-text{margin-top:2px}
.s svg{display:block;fill:none;stroke:#b0b0b0;stroke-width:1.4;margin-right:9.5px}`,
`<div class="hd">${T(50,'Data')}${dbl('#fff')}</div><div class="s"><svg width="22" height="22" viewBox="0 0 22 22"><circle cx="9" cy="9" r="7.8"/><path d="M14.6 14.6 21 21"/></svg>${T(62,'Search')}</div>` +
[[137,'ab_avg_spending'],[130,'cleaned_data (2)'],[188,'cohort_retention_perc...'],[188,'cohort_retention_perc...'],[184,'rfm_scored_segmented']].map(t => `<data-table-item>${T(...t)}</data-table-item>`).join(''));

/* Condenses its text to the advance width given in "w". */
define('fit-text', `:host{display:inline-block;flex:none;white-space:nowrap;text-align:left;vertical-align:top}span{display:inline-block;transform-origin:0 50%;vertical-align:top}`,
 `<span><slot></slot></span>`, el => {
  const s = el.shadowRoot.querySelector('span'), w = +el.getAttribute('w');
  const n = s.getBoundingClientRect().width;
  el.style.width = w + 'px';
  if (n) s.style.transform = `scaleX(${w / n})`;
 });
</script>
</body>
</html>
